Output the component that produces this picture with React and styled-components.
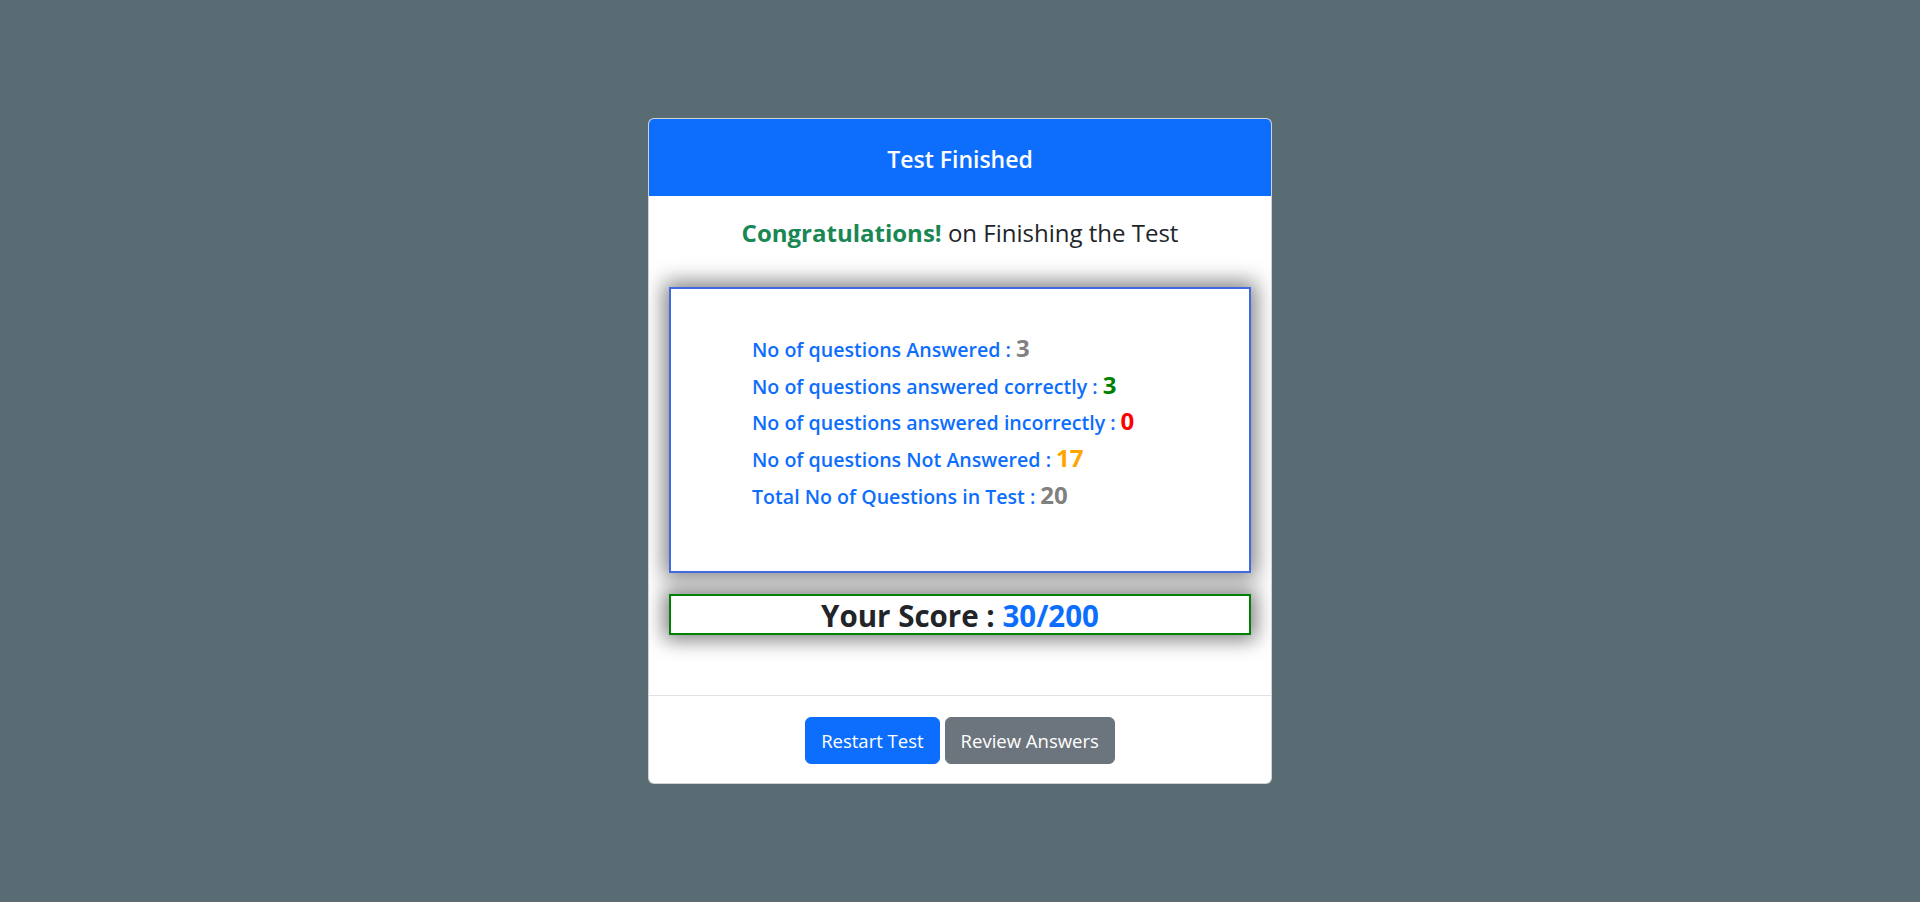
import React from "react";
import styled, { createGlobalStyle } from "styled-components";

const GlobalStyle = createGlobalStyle`
  * { box-sizing: border-box; }
  html, body { margin: 0; padding: 0; }
  body {
    background: #596c73;
    font-family: "Open Sans", "Noto Sans", sans-serif;
    color: #212529;
  }
`;

const Page = styled.div`
  min-height: 100vh;
  display: flex;
  align-items: center;
  justify-content: center;
`;

const Card = styled.div`
  width: 624px;
  background: #fff;
  border: 1px solid rgba(0, 0, 0, 0.175);
  border-radius: 6px;
  overflow: hidden;
  display: flex;
  flex-direction: column;
`;

const Header = styled.div`
  background: #0d6efd;
  color: #fff;
  height: 77px;
  padding-top: 2px;
  display: flex;
  align-items: center;
  justify-content: center;
  font-size: 23px;
  font-weight: 600;
`;

const Body = styled.div`
  padding: 22px 20px 60px;
  display: flex;
  flex-direction: column;
`;

const Congrats = styled.div`
  text-align: center;
  font-size: 24px;
  line-height: 29px;
  font-weight: 500;
  margin-bottom: 40px;
`;

const Success = styled.span`
  color: #198754;
  font-weight: 700;
`;

const StatsBox = styled.div`
  height: 286px;
  border: 2px solid #4169e1;
  box-shadow: 0 0 20px 5px gray;
  padding: 41px 20px 0 81px;
  background: #fff;
`;

const Row = styled.div`
  height: 36.7px;
  display: flex;
  align-items: baseline;
  gap: 5px;
  color: #0d6efd;
  font-size: 19.6px;
  font-weight: 600;
  line-height: 36.7px;
`;

const Num = styled.span`
  color: ${(p) => p.$color};
  font-size: 24px;
  font-weight: 700;
`;

const ScoreBox = styled.div`
  margin-top: 21px;
  height: 41px;
  padding-top: 2px;
  border: 2px solid green;
  box-shadow: 0 0 20px 5px gray;
  background: #fff;
  text-align: center;
  font-size: 29.5px;
  font-weight: 700;
  line-height: 35px;
`;

const ScoreValue = styled.span`
  color: #0d6efd;
`;

const Footer = styled.div`
  border-top: 1px solid #dee2e6;
  padding: 21px 16px 19px;
  display: flex;
  justify-content: center;
  gap: 5px;
`;

const Button = styled.button`
  height: 47px;
  padding: 0 15px;
  border: 1px solid ${(p) => p.$bg};
  background: ${(p) => p.$bg};
  color: #fff;
  font-family: "Open Sans", "Noto Sans", sans-serif;
  font-size: 18.5px;
  border-radius: 6px;
  cursor: pointer;
`;

const stats = [
  { label: "No of questions Answered :", value: "3", color: "gray" },
  { label: "No of questions answered correctly :", value: "3", color: "green" },
  { label: "No of questions answered incorrectly :", value: "0", color: "red" },
  { label: "No of questions Not Answered :", value: "17", color: "orange" },
  { label: "Total No of Questions in Test :", value: "20", color: "gray" },
];

export default function App() {
  return (
    <>
      <GlobalStyle />
      <Page>
        <Card>
          <Header>Test Finished</Header>
          <Body>
            <Congrats>
              <Success>Congratulations!</Success> on Finishing the Test
            </Congrats>
            <StatsBox>
              {stats.map((s) => (
                <Row key={s.label}>
                  <span>{s.label}</span>
                  <Num $color={s.color}>{s.value}</Num>
                </Row>
              ))}
            </StatsBox>
            <ScoreBox>
              Your Score : <ScoreValue>30/200</ScoreValue>
            </ScoreBox>
          </Body>
          <Footer>
            <Button $bg="#0d6efd">Restart Test</Button>
            <Button $bg="#6c757d">Review Answers</Button>
          </Footer>
        </Card>
      </Page>
    </>
  );
}
